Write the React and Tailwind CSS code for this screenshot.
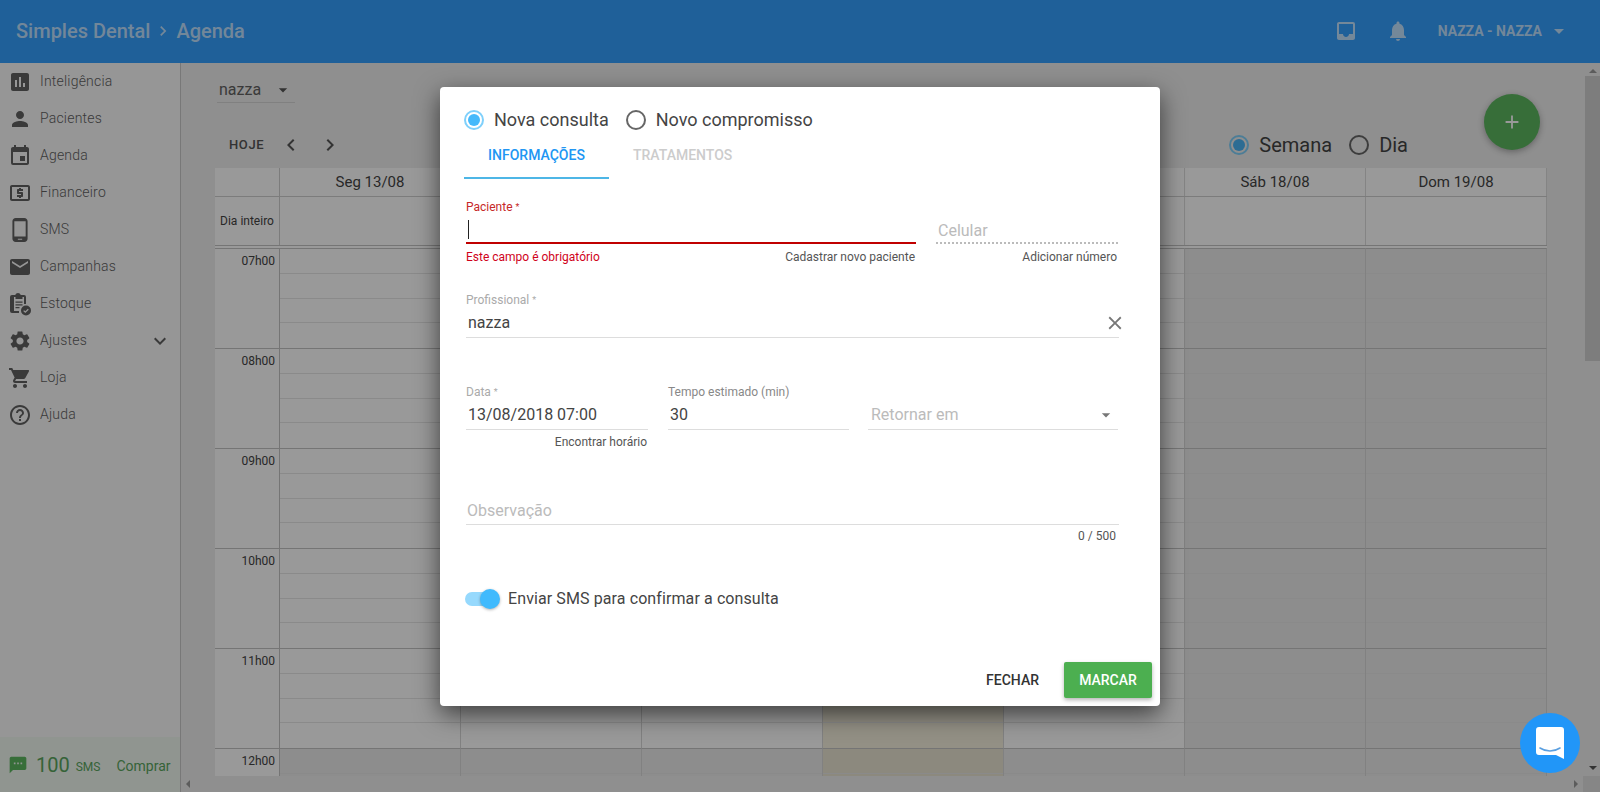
import React from 'react'
import {
  MdInsertChart, MdPerson, MdEvent, MdLocalAtm, MdPhoneAndroid, MdEmail, MdSettings, MdShoppingCart,
  MdHelpOutline, MdExpandMore, MdInbox, MdNotifications, MdClose, MdArrowDropDown, MdChevronLeft,
  MdChevronRight, MdTextsms, MdAdd,
} from 'react-icons/md'

function StockIcon() {
  return (
    <svg width="24" height="24" viewBox="0 0 24 24" fill="#616161">
      <path d="M5 4h3.2a3 3 0 0 1 5.6 0H17a2 2 0 0 1 2 2v7h-2V6h-1.5v2h-7V6H7v14h5v2H5a2 2 0 0 1-2-2V6a2 2 0 0 1 2-2z" transform="translate(-1 -1)" />
      <path d="M7.500 9.500h7v1.200h-7zM7.500 12.300h7v1.200h-7zM7.500 15.100h4v1.200h-4z" />
      <circle cx="18" cy="18.500" r="5" />
      <path d="M15.700 18.600l1.600 1.600 3-3" fill="none" stroke="#fafafa" strokeWidth="1.300" />
    </svg>
  )
}

const menu = [
  { label: 'Inteligência', icon: <MdInsertChart size={24} /> },
  { label: 'Pacientes', icon: <MdPerson size={24} /> },
  { label: 'Agenda', icon: <MdEvent size={24} /> },
  { label: 'Financeiro', icon: <MdLocalAtm size={24} /> },
  { label: 'SMS', icon: <MdPhoneAndroid size={26} /> },
  { label: 'Campanhas', icon: <MdEmail size={24} /> },
  { label: 'Estoque', icon: <StockIcon /> },
  { label: 'Ajustes', icon: <MdSettings size={24} />, more: true },
  { label: 'Loja', icon: <MdShoppingCart size={24} /> },
  { label: 'Ajuda', icon: <MdHelpOutline size={24} /> },
]

const days = ['Seg 13/08', 'Ter 14/08', 'Qua 15/08', 'Qui 16/08', 'Sex 17/08', 'Sáb 18/08', 'Dom 19/08']
const hours = ['07h00', '08h00', '09h00', '10h00', '11h00', '12h00']

function Radio({ checked, dim }) {
  return (
    <span className={`flex h-5 w-5 shrink-0 items-center justify-center rounded-full border-2 ${checked ? 'border-[#7fd0fb]' : 'border-[#666666]'}`}>
      {checked && <span className={`h-3 w-3 rounded-full ${dim ? 'bg-[#4ab4f5]' : 'bg-[#45b9fb]'}`}></span>}
    </span>
  )
}

function Sidebar() {
  return (
    <aside className="flex w-[181px] shrink-0 flex-col border-r border-[#c8c8c8] bg-[#fafafa]">
      <nav className="flex-1">
        {menu.map(item => (
          <div key={item.label} className="flex h-[37px] items-center text-[#616161]">
            <span className="flex w-10 shrink-0 items-center justify-center">{item.icon}</span>
            <span className="mb-[2px] text-sm font-light tracking-[0.2px]">{item.label}</span>
            {item.more && <MdExpandMore size={24} className="ml-auto mr-2" />}
          </div>
        ))}
      </nav>
      <div className="flex h-[55px] items-center bg-[#f0f8f0] pl-[8px] text-[#5aa65e]">
        <MdTextsms size={20} className="text-[#5cb860]" />
        <span className="ml-2 text-xl">100</span>
        <span className="ml-[6px] mt-1 text-xs">SMS</span>
        <span className="ml-[16px] mt-[2px] text-sm">Comprar</span>
      </div>
    </aside>
  )
}

function Calendar() {
  return (
    <div className="w-[1332px] overflow-hidden">
      <div className="grid h-[29px] grid-cols-[65px_repeat(7,1fr)] border-b border-[#cfcfcf] bg-white text-[15px] text-[#444444]">
        <div className="border-r border-[#cfcfcf]"></div>
        {days.map(d => (
          <div key={d} className="flex items-center justify-center border-r border-[#dddddd]">{d}</div>
        ))}
      </div>
      <div className="grid h-[49px] grid-cols-[65px_repeat(7,1fr)] border-b border-[#c4c4c4] bg-white">
        <div className="flex items-center justify-center border-r border-[#cfcfcf] text-xs text-[#444444]">Dia inteiro</div>
        {days.map(d => (
          <div key={d} className="border-r border-[#dddddd]"></div>
        ))}
      </div>
      <div className="h-[2px] bg-white"></div>
      {hours.map(h => (
        <div key={h} className="grid h-[100px] grid-cols-[65px_repeat(7,1fr)]">
          <div className="border-r border-t border-[#c4c4c4] bg-white pr-1 pt-[4px] text-right text-xs text-[#444444]">{h}</div>
          {days.map((d, i) => {
            let bg = 'bg-white'
            if (i > 4 || h === '12h00') bg = 'bg-[#ebebeb]'
            if (i === 3) bg = h === '12h00' ? 'bg-[#e9e4d2]' : 'bg-[#f5f0de]'
            return (
              <div key={d} className={`grid grid-rows-4 border-r border-t border-r-[#d8d8d8] border-t-[#c4c4c4] ${bg}`}>
                <div className="border-b border-[#e6e6e6]"></div>
                <div className="border-b border-[#e6e6e6]"></div>
                <div className="border-b border-[#e6e6e6]"></div>
                <div></div>
              </div>
            )
          })}
        </div>
      ))}
    </div>
  )
}

function Main() {
  return (
    <main className="flex min-w-0 flex-1 flex-col">
      <div className="flex min-h-0 flex-1">
        <div className="min-w-0 flex-1 overflow-hidden bg-[#eeeeee] pl-[34px]">
          <div className="flex h-[105px] w-[1332px] items-start justify-between">
            <div className="pt-[14px]">
              <div className="ml-[2px] flex h-[26px] w-[78px] items-center justify-between border-b border-[#d6d6d6] pl-[2px] pr-[2px] text-base text-[#616161]">
                nazza
                <MdArrowDropDown size={20} className="text-[#555555]" />
              </div>
              <div className="mt-[32px] flex h-5 items-center pl-[14px] text-[#555555]">
                <span className="text-[13px] font-medium tracking-[0.6px]">HOJE</span>
                <MdChevronLeft size={24} className="ml-[15px]" />
                <MdChevronRight size={24} className="ml-[15px]" />
              </div>
            </div>
            <div className="flex justify-end pr-[7px]">
              <div className="mr-[76px] mt-[72px] flex h-5 items-center text-xl text-[#444444]">
                <Radio checked dim />
                <span className="ml-[10px]">Semana</span>
                <span className="ml-[17px]"><Radio /></span>
                <span className="ml-[10px]">Dia</span>
              </div>
              <button className="mt-[31px] flex h-14 w-14 shrink-0 items-center justify-center rounded-full bg-[#5cb860] text-white shadow-[0_2px_6px_rgba(0,0,0,0.3)]">
                <MdAdd size={22} />
              </button>
            </div>
          </div>
          <Calendar />
        </div>
        <div className="flex w-[15px] shrink-0 flex-col items-center bg-[#eeeeee]">
          <div className="mt-[6px] h-0 w-0 border-x-[4px] border-b-[4px] border-x-transparent border-b-[#999999]"></div>
          <div className="mt-[3px] h-[285px] w-full bg-[#d0d0d0]"></div>
          <div className="mt-auto mb-[6px] h-0 w-0 border-x-[4px] border-t-[4px] border-x-transparent border-t-[#555555]"></div>
        </div>
      </div>
      <div className="flex h-4 items-center justify-between bg-[#eeeeee] pl-[5px]">
        <div className="h-0 w-0 border-y-[4px] border-r-[4px] border-y-transparent border-r-[#999999]"></div>
        <div className="flex items-center">
          <div className="mr-[5px] h-0 w-0 border-y-[4px] border-l-[4px] border-y-transparent border-l-[#999999]"></div>
          <div className="h-4 w-[17px] bg-[#e0e0e0]"></div>
        </div>
      </div>
    </main>
  )
}

function Star() {
  return <span className="ml-[3px] align-top text-[9px]">*</span>
}

function Modal() {
  return (
    <div className="flex h-[619px] w-[720px] flex-col rounded-[4px] bg-white pl-[24px] pr-[41px] shadow-[0_8px_24px_rgba(0,0,0,0.6)]">
      <div className="flex h-[43px] shrink-0 items-end text-lg text-[#444444]">
        <div className="flex h-5 items-center">
          <Radio checked />
          <span className="ml-[10px]">Nova consulta</span>
          <span className="ml-[17px]"><Radio /></span>
          <span className="ml-[10px]">Novo compromisso</span>
        </div>
      </div>
      <div className="mt-[7px] flex h-[42px] shrink-0 text-sm font-medium">
        <div className="flex w-[145px] justify-center border-b-2 border-[#4db6e6] pt-[8px] text-[#2196f3]">INFORMAÇÕES</div>
        <div className="ml-[24px] pt-[8px] text-[#cccccc]">TRATAMENTOS</div>
      </div>
      <div className="mt-[19px] flex shrink-0 pl-[2px]">
        <div className="w-[450px]">
          <div className="h-[20px] text-xs leading-[18px] text-[#c62828]">Paciente<Star /></div>
          <div className="flex h-[26px] items-center border-b-2 border-[#c00000] pl-[2px]">
            <span className="h-[19px] w-px bg-[#222222]"></span>
          </div>
          <div className="mt-[5px] flex justify-between text-xs">
            <span className="text-[#d0021b]">Este campo é obrigatório</span>
            <span className="pr-px text-[#555555]">Cadastrar novo paciente</span>
          </div>
        </div>
        <div className="ml-[20px] w-[182px]">
          <div className="h-[20px]"></div>
          <div className="flex h-[26px] items-center border-b-2 border-dotted border-[#bbbbbb] pl-[2px] pt-[2px] text-base text-[#bbbbbb]">Celular</div>
          <div className="mt-[5px] pr-px text-right text-xs text-[#555555]">Adicionar número</div>
        </div>
      </div>
      <div className="mt-[28px] shrink-0 pl-[2px]">
        <div className="text-xs leading-[14px] text-[#aaaaaa]">Profissional<Star /></div>
        <div className="mt-[3px] flex h-[28px] items-center justify-between border-b border-[#dddddd] pl-[2px] text-base text-[#444444]">
          nazza
          <MdClose size={22} className="-mr-[7px] text-[#777777]" />
        </div>
      </div>
      <div className="mt-[47px] flex shrink-0 pl-[2px]">
        <div className="w-[182px]">
          <div className="text-xs leading-[14px] text-[#aaaaaa]">Data<Star /></div>
          <div className="mt-[2px] flex h-[29px] items-center border-b border-[#dddddd] pl-[2px] text-base text-[#444444]">13/08/2018 07:00</div>
          <div className="mt-[4px] pr-px text-right text-xs text-[#555555]">Encontrar horário</div>
        </div>
        <div className="ml-[20px] w-[181px]">
          <div className="text-xs leading-[14px] text-[#888888]">Tempo estimado (min)</div>
          <div className="mt-[2px] flex h-[29px] items-center border-b border-[#dddddd] pl-[2px] text-base text-[#444444]">30</div>
        </div>
        <div className="ml-[19px] w-[250px]">
          <div className="h-[14px]"></div>
          <div className="mt-[2px] flex h-[29px] items-center justify-between border-b border-[#dddddd] pl-[3px] pr-[2px] text-base text-[#bbbbbb]">
            Retornar em
            <MdArrowDropDown size={20} className="text-[#777777]" />
          </div>
        </div>
      </div>
      <div className="mt-[48px] shrink-0 pl-[2px]">
        <div className="flex h-[27px] items-center border-b border-[#dddddd] pl-[1px] text-base text-[#bbbbbb]">Observação</div>
        <div className="mt-[3px] pr-[3px] text-right text-xs text-[#555555]">0 / 500</div>
      </div>
      <div className="mt-[43px] flex h-[24px] shrink-0 items-center pl-[1px]">
        <div className="relative h-[14px] w-[30px] rounded-full bg-[#96d9fd]">
          <span className="absolute -top-[3px] left-[15px] h-5 w-5 rounded-full bg-[#40bafd] shadow-[0_1px_3px_rgba(0,0,0,0.3)]"></span>
        </div>
        <span className="ml-[13px] text-base tracking-[0.1px] text-[#444444]">Enviar SMS para confirmar a consulta</span>
      </div>
      <div className="-mr-[33px] mt-auto mb-[8px] flex shrink-0 items-center justify-end">
        <span className="mr-[25px] text-sm font-medium text-[#333333]">FECHAR</span>
        <button className="flex h-9 w-[88px] items-center justify-center rounded-[2px] bg-[#4caf50] text-sm font-medium text-white shadow-[0_2px_4px_rgba(0,0,0,0.3)]">MARCAR</button>
      </div>
    </div>
  )
}

function App() {
  return (
    <div className="relative flex h-[792px] w-[1600px] flex-col overflow-hidden font-['Roboto',sans-serif]">
      <header className="flex h-[63px] shrink-0 items-center bg-[#34a0ff] pb-[2px] pl-4 pr-[29px] text-white/70">
        <span className="text-xl font-medium">Simples Dental</span>
        <MdChevronRight size={20} className="ml-[3px] mr-[3px]" />
        <span className="text-xl font-medium">Agenda</span>
        <MdInbox size={24} className="ml-auto" />
        <MdNotifications size={24} className="ml-[28px]" />
        <span className="ml-[28px] text-sm font-bold">NAZZA - NAZZA</span>
        <MdArrowDropDown size={24} className="ml-[5px]" />
      </header>
      <div className="flex min-h-0 flex-1">
        <Sidebar />
        <Main />
      </div>

      {/* backdrop + dialog */}
      <div className="absolute inset-0 flex items-center justify-center bg-black/40">
        <Modal />
      </div>

      <button className="absolute bottom-[19px] right-[20px] flex h-[60px] w-[60px] items-center justify-center rounded-full bg-[#2196f8]">
        <svg width="28" height="32" viewBox="0 0 28 32">
          <path d="M3 0h22a3 3 0 0 1 3 3v29l-8-4H3a3 3 0 0 1-3-3V3a3 3 0 0 1 3-3z" fill="#ffffff" />
          <path d="M4 21c6 4 14 4 20 0" fill="none" stroke="#5a9fe0" strokeWidth="1.600" strokeLinecap="round" />
        </svg>
      </button>
    </div>
  )
}

export default App
